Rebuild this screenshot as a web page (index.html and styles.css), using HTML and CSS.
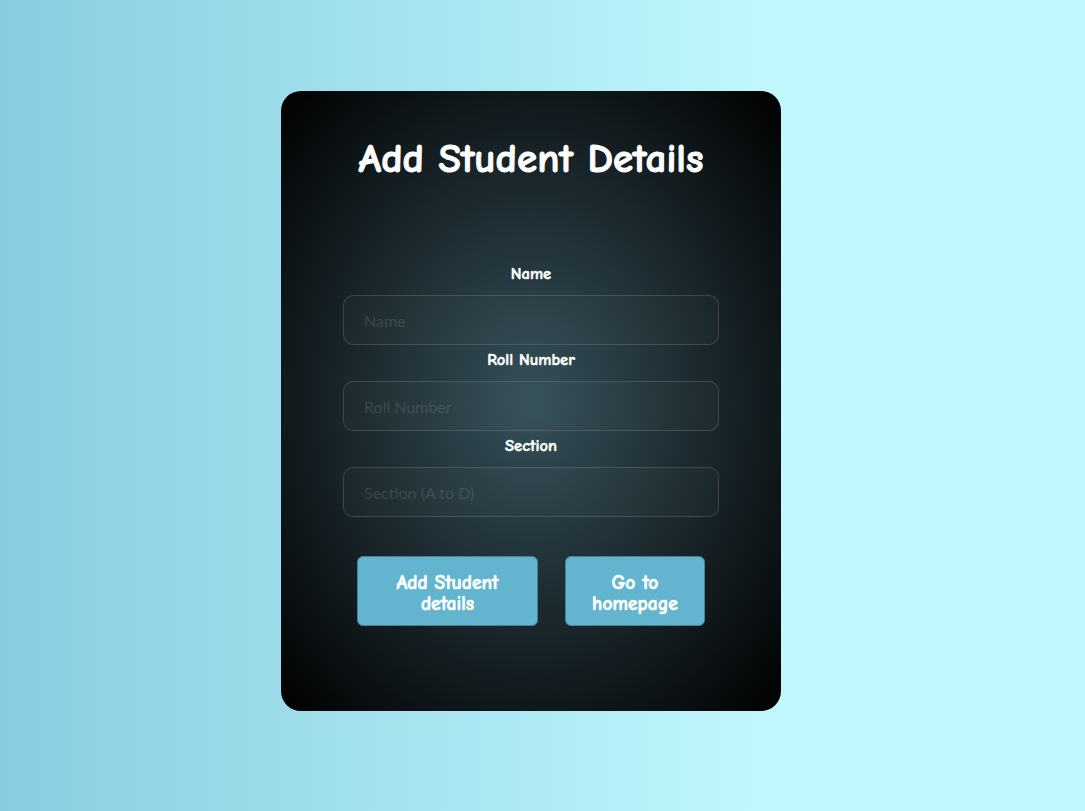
FILE: index.html
```
<!DOCTYPE html>
<html lang="en">
<head>
<meta charset="utf-8">
<title>Add Student Details</title>
<link rel="stylesheet" href="styles.css">
</head>
<body>
<main class="page">
  <section class="card">
    <h1 class="title">Add Student Details</h1>
    <form class="form">
      <label class="label" for="name">Name</label>
      <input class="input" id="name" type="text" placeholder="Name">
      <label class="label" for="roll">Roll Number</label>
      <input class="input" id="roll" type="text" placeholder="Roll Number">
      <label class="label" for="section">Section</label>
      <input class="input" id="section" type="text" placeholder="Section (A to D)">
      <div class="actions">
        <button class="btn btn-add" type="button">Add Student<br>details</button>
        <button class="btn btn-home" type="button">Go to<br>homepage</button>
      </div>
    </form>
  </section>
</main>
</body>
</html>
```
FILE: styles.css
```
* { box-sizing: border-box; }
html, body { margin: 0; height: 100%; }
body {
  background: linear-gradient(to right, #87cde0 0%, #c2f8fd 72%, #c2f8fd 100%);
  font-family: "Comic Sans MS", "Comic Neue", cursive;
}
.page {
  height: 811px;
  display: flex;
  justify-content: center;
  padding-top: 91px;
  padding-right: 23px;
}
.card {
  width: 500px;
  height: 620px;
  border-radius: 20px;
  background: radial-gradient(ellipse at center, #35505a 0%, #000 100%);
  display: flex;
  flex-direction: column;
  align-items: center;
  padding-top: 40px;
}
.title {
  margin: 0;
  color: #fff;
  font-size: 41px;
  font-weight: bold;
  line-height: 56px;
  -webkit-text-stroke: 1px #fff;
}
.form {
  width: 376px;
  margin-top: 72px;
  display: flex;
  flex-direction: column;
  align-items: stretch;
}
.label {
  display: block;
  text-align: center;
  color: #fff;
  font-size: 16.5px;
  font-weight: bold;
  line-height: 27px;
  padding-top: 1px;
  margin-bottom: 8px;
  -webkit-text-stroke: 0.5px #fff;
}
.input {
  height: 50px;
  border: 1px solid rgba(150, 140, 140, 0.3);
  border-radius: 10px;
  background: rgba(255, 255, 255, 0.02);
  padding: 0 20px;
  font-family: Lato, sans-serif;
  font-size: 16px;
  color: #fff;
  outline: none;
}
.input::placeholder { color: rgba(255, 255, 255, 0.13); }
.actions {
  display: flex;
  justify-content: center;
  gap: 27px;
  margin-top: 39px;
}
.btn {
  height: 70px;
  background: #63b5cf;
  border: 1px solid #4d7f90;
  border-radius: 6px;
  color: #fff;
  font-family: inherit;
  font-size: 19.5px;
  font-weight: bold;
  line-height: 21px;
  padding: 3px 0 0;
  -webkit-text-stroke: 0.6px #fff;
}
.btn-add { width: 181px; }
.btn-home { width: 140px; }
```
